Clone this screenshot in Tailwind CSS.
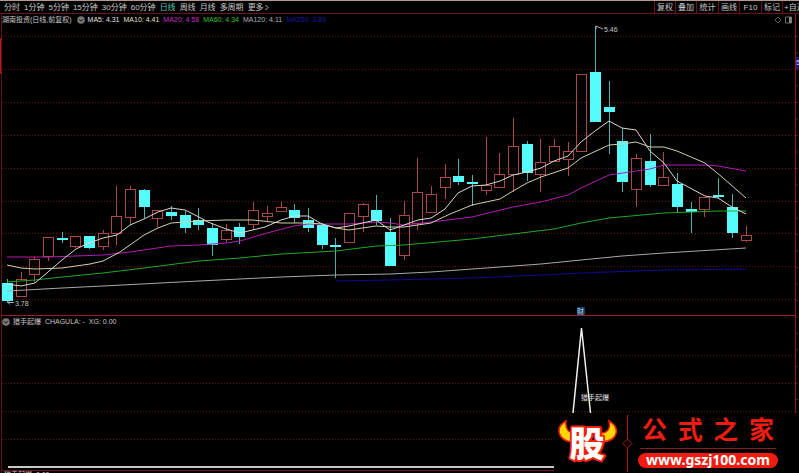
<!DOCTYPE html>
<html lang="zh-CN">

<head>
    <meta charset="UTF-8">
    <meta name="viewport" content="width=device-width, initial-scale=1.0">
    <title>湖南投资 日线</title>
    <script src="https://cdn.jsdelivr.net/npm/@tailwindcss/browser@4"></script>
</head>

<body class="relative flex flex-col min-h-screen overflow-hidden bg-black text-[#c8c8c8] text-[8px] leading-[12px] whitespace-nowrap font-['Liberation_Sans','Noto_Sans_CJK_SC',sans-serif]">
    <header class="flex items-stretch h-[14px] shrink-0 border-t border-t-[#b59a8a] border-b border-b-[#6b1414] pl-1">
        <nav class="flex items-center gap-1 pt-px">
            <button>分时</button>
            <button>1分钟</button>
            <button>5分钟</button>
            <button>15分钟</button>
            <button>30分钟</button>
            <button>60分钟</button>
            <button class="text-[#4fc9b8]">日线</button>
            <button>周线</button>
            <button>月线</button>
            <button>多周期</button>
            <button class="flex items-center gap-px">更多
                <svg class="w-[4px] h-[7px]" viewBox="0 0 4 7" fill="none" stroke="currentColor"><path d="M.5 1 3 3.5 .5 6" /></svg>
            </button>
        </nav>
        <div class="flex ml-auto w-[145px] shrink-0 overflow-hidden">
            <button class="w-[21px] shrink-0 border-l border-[#6b1414] pt-px">复权</button>
            <button class="w-[21px] shrink-0 border-l border-[#6b1414] pt-px">叠加</button>
            <button class="w-[22px] shrink-0 border-l border-[#6b1414] pt-px">统计</button>
            <button class="w-[21px] shrink-0 border-l border-[#6b1414] pt-px">画线</button>
            <button class="w-[22px] shrink-0 border-l border-[#6b1414] pt-px">F10</button>
            <button class="w-[21px] shrink-0 border-l border-[#6b1414] pt-px">标记</button>
            <button class="shrink-0 border-l border-[#6b1414] pt-px pl-px">+自选</button>
        </div>
    </header>

    <main class="flex grow">
        <div class="w-[2px] shrink-0 border-r border-[#5a1212]">
            <div class="mt-6 h-9 w-px bg-[#c01818]"></div>
        </div>

        <div class="flex flex-col grow min-w-0">
            <section class="relative h-[302px] border-b border-b-[#a01c1c]">
                <div class="absolute inset-x-0 top-0 flex items-center h-[12px]">
                    <h1 class="text-[7px]">湖南投资(日线,前复权)</h1>
                    <svg class="w-[8px] h-[8px] ml-[5px] mr-[3px]" viewBox="0 0 8 8"><circle cx="4" cy="4" r="3.8" fill="#777" /><path d="M2 3.2 4 5.2 6 3.2" fill="none" stroke="#111" /></svg>
                    <div class="flex gap-[4px] text-[7px]">
                        <span class="text-[#e0e0e0]">MA5: 4.31</span>
                        <span class="text-[#e0e0c0]">MA10: 4.41</span>
                        <span class="text-[#c030c0]">MA20: 4.58</span>
                        <span class="text-[#38c038]">MA60: 4.34</span>
                        <span class="text-[#b0b0b0]">MA120: 4.11</span>
                        <span class="text-[#1818a0]">MA250: 3.89</span>
                    </div>
                    <svg class="w-[17px] h-[8px] ml-auto mr-[3px]" viewBox="0 0 17 8" fill="none" stroke="#888"><path d="M3 1 6 4 3 7 0 4Z" stroke-width=".7" /><path d="M10.5 1h6v6h-6z" stroke-width=".8" /><path d="M14 1h2.5v6H14z" fill="#888" stroke="none" /></svg>
                </div>
                <svg id="kline" class="block w-full h-[301px] text-[7px]" fill="none"></svg>
            </section>

            <section class="relative h-[155px] border-b border-b-[#6b1414]">
                <div class="absolute inset-x-0 top-0 flex items-center h-[11px]">
                    <svg class="w-[8px] h-[8px] mr-[3px]" viewBox="0 0 8 8"><circle cx="4" cy="4" r="3.8" fill="#777" /><path d="M2 3.2 4 5.2 6 3.2" fill="none" stroke="#111" /></svg>
                    <h2 class="text-[7px]">猎手起爆&nbsp; CHAGULA: -&nbsp; XG: 0.00</h2>
                </div>
                <svg id="signal" class="block w-full h-[154px] text-[7px]" fill="none"></svg>
            </section>

            <div class="flex h-[2px] overflow-hidden leading-[8px] text-[7px] pl-[2px]">猎手起爆: 0.00</div>
        </div>

        <aside class="relative w-[4px] shrink-0 border-l border-[#8c1a1a]">
            <svg id="ticks" class="w-[3px] h-[400px]" stroke="#6b1414"></svg>
            <span class="absolute left-0 top-[43px] h-[12px] w-[4px] overflow-hidden bg-[#2a1470] text-[#c8c8ff] text-[7px]">5.25</span>
        </aside>
    </main>

    <a href="#" class="absolute right-0 bottom-0 flex items-center w-[245px] h-[60px] bg-black text-[#f01c10] pl-[3px]">
        <svg class="w-[62px] h-[60px] shrink-0" viewBox="0 0 62 60">
            <path d="M9 8C-2 14 0 27 15 29L19 20C12 21 8 16 9 8ZM52 8C63 14 62 27 46 29L42 20C50 21 54 16 52 8Z" fill="#ffd800" stroke="#f02010" stroke-width="1.5" />
            <text x="30" y="44" text-anchor="middle" font-size="35" font-weight="900" font-family="Noto Sans CJK SC" fill="#fff" stroke="#f02010" stroke-width="4" stroke-linejoin="round" paint-order="stroke">股</text>
        </svg>
        <svg class="w-[12px] h-[60px] shrink-0 ml-[3px]" viewBox="0 0 12 60" fill="none" stroke="#b01810"><path d="M5.500 2v24M5.500 35v24M5.500 26 10 30.500 5.500 35 1 30.500Z" /></svg>
        <div class="flex flex-col ml-[4px] mb-[3px] w-[140px]">
            <strong class="flex justify-between px-[4px] text-[25px] leading-[32px] font-bold font-['Liberation_Serif','Noto_Sans_CJK_SC',serif]"><span>公</span><span>式</span><span>之</span><span>家</span></strong>
            <span class="border-t border-[#8c1a1a] mx-[2px] mt-px mb-[4px]"></span>
            <span class="h-[15px] rounded-full bg-[#f01c10] text-center text-white text-[14px] leading-[13px] font-bold font-['Noto_Sans',sans-serif]">www.gszj100.com</span>
        </div>
    </a>

    <script>
        // y values are window rows; each panel is shifted by its own top
        const STEP = 13.676, X0 = 5.5;
        // [high, body top, body bottom, low, rising]
        const candles = [
            [279, 283, 301, 303, 0], [272, 279, 296, 297, 1], [257, 259, 274, 282, 1], [237, 237, 256, 261, 1], [232, 238, 240, 243, 0],
            [236, 236, 246, 248, 1], [236, 236, 248, 249, 0], [230, 233, 246, 250, 1], [186, 216, 233, 245, 1], [186, 189, 217, 225, 1],
            [189, 190, 207, 218, 0], [210, 210, 218, 227, 1], [206, 212, 216, 220, 0], [211, 215, 228, 233, 0], [208, 220, 225, 230, 0],
            [223, 228, 245, 256, 0], [224, 230, 239, 242, 1], [223, 227, 237, 244, 0], [202, 210, 224, 230, 1], [206, 213, 216, 221, 1],
            [202, 207, 211, 212, 1], [204, 210, 218, 223, 0], [208, 220, 228, 232, 0], [223, 225, 245, 249, 0], [238, 245, 247, 278, 0],
            [213, 213, 242, 242, 1], [203, 204, 216, 232, 1], [195, 210, 221, 225, 0], [218, 232, 266, 266, 0], [201, 215, 255, 260, 1],
            [158, 192, 223, 230, 1], [186, 194, 212, 213, 1], [164, 177, 187, 199, 1], [159, 176, 182, 185, 0], [175, 182, 184, 206, 0],
            [137, 185, 190, 195, 1], [153, 174, 187, 187, 1], [118, 146, 174, 192, 1], [141, 144, 173, 181, 0], [139, 162, 174, 192, 1],
            [139, 146, 161, 162, 1], [142, 151, 159, 176, 1], [74, 74, 151, 151, 1], [26, 72, 122, 122, 0], [81, 107, 112, 154, 0],
            [128, 141, 182, 192, 0], [154, 158, 189, 207, 1], [134, 161, 185, 187, 0], [152, 177, 185, 186, 1], [173, 184, 207, 212, 0],
            [202, 209, 212, 233, 0], [197, 197, 209, 217, 1], [178, 195, 197, 199, 0], [194, 207, 233, 238, 0], [226, 235, 240, 242, 1],
        ];
        const averages = {
            '#b01cb0': '7,257 48,257 103,255 130,252 171,246 199,245 226,243 240,241 267,233 294,226 308,224 349,224 376,222 390,223 404,225 431,222 472,217 513,207 541,202 568,195 581,188 609,175 650,169 664,165 705,165 718,166 746,171',
            '#20a828': '7,282 35,280 62,277 103,273 144,268 199,261 240,258 281,254 336,251 376,246 404,245 472,239 513,234 554,229 581,223 609,218 664,213 718,211 746,211',
            '#a8a8a8': '7,291 62,288 103,286 199,281 281,277 336,275 390,274 431,272 486,268 541,264 581,260 622,256 664,253 746,248',
            '#0c0c98': '336,281 390,280 472,278 541,275 581,273 664,270 746,269',
            '#d0d0a8': '7,265 21,268 35,269 62,268 90,264 103,261 120,252 144,235 158,228 171,223 199,221 226,220 253,220 281,223 308,223 322,224 336,228 349,230 376,226 390,227 404,227 431,223 450,214 472,205 500,199 513,191 527,183 541,177 568,168 581,158 609,145 622,144 636,142 650,147 664,147 677,151 705,163 722,177 746,198',
            '#d8d8d0': '7,284 21,286 35,283 48,272 62,260 76,249 89,243 103,238 117,235 130,225 144,219 158,212 171,208 185,210 199,217 208,222 226,229 240,233 265,227 281,220 295,216 308,216 322,224 336,228 349,226 376,220 390,230 404,225 418,220 431,218 445,209 458,193 472,186 486,185 500,181 513,175 527,172 541,168 554,161 568,156 581,142 595,131 609,121 622,128 636,130 650,151 664,163 677,181 705,196 718,198 732,207 746,214',
        };

        const grid = (rows, top) => rows.map(y =>
            `<line x1="0" x2="100%" y1="${y - top + .5}" y2="${y - top + .5}" stroke="#6a1010" stroke-dasharray="1 2"/>`).join('');

        let out = grid([36, 69, 102, 135, 168, 201, 233, 266, 299], 14);
        candles.forEach(([high, top, bottom, low, up], i) => {
            const x = Math.round(X0 + i * STEP - .5) + .5;
            if (up) {
                out += `<path d="M${x} ${high - 14}V${top - 14}M${x} ${bottom - 14}V${low - 14}" stroke="#a84848"/>
                    <rect x="${x - 5}" y="${top - 13.5}" width="10" height="${bottom - top}" stroke="#a84848"/>`;
            } else {
                out += `<path d="M${x} ${high - 14}V${low - 14}" stroke="#48b0b0"/>
                    <rect x="${x - 5.5}" y="${top - 14}" width="11" height="${bottom - top}" fill="#54fcfc"/>`;
            }
        });
        out += '<g transform="translate(-2 -14)">';
        for (const color in averages) {
            out += `<polyline points="${averages[color]}" stroke="${color}"/>`;
        }
        out += `<path d="M596 26 603 29M596 26v3M8 302.5h6M8 302.5l2-2M8 302.5l2 2" stroke="#aaa"/>
            <g fill="#c8c8c8"><text x="604" y="32">5.46</text><text x="15" y="306">3.78</text></g>
            <rect x="577" y="307" width="8" height="8" fill="#183858"/>
            <text x="577" y="314" fill="#a8d8f8">财</text></g>`;
        document.getElementById('kline').innerHTML = out;

        document.getElementById('signal').innerHTML = grid([355, 383, 411, 439], 316) +
            `<g transform="translate(-2 -316)">
                <path d="M8 467H570" stroke="#c8c8c8" stroke-width="2"/>
                <path d="M573 413 581.5 328 590.5 413" stroke="#f0f0f0" stroke-width="1.5"/>
                <text x="581" y="400" fill="#e0e0e0">猎手起爆</text>
            </g>`;

        let ticks = '';
        for (let y = 22.5; y < 400; y += 16.5) ticks += `<path d="M0 ${y}h2"/>`;
        document.getElementById('ticks').innerHTML = ticks;
    </script>
</body>

</html>
